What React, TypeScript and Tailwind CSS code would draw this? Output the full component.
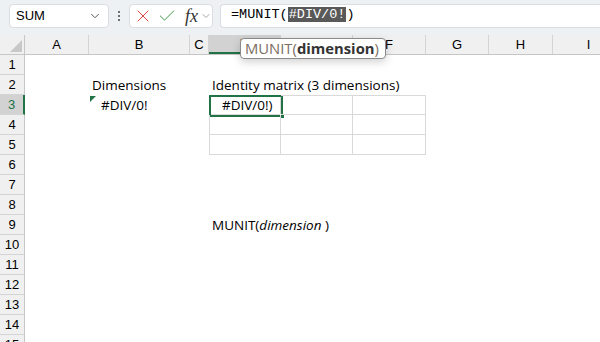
import React from 'react';
import { ChevronDown, X, Check } from 'lucide-react';

const cols = [
  { name: 'A', w: 64 },
  { name: 'B', w: 101 },
  { name: 'C', w: 19 },
  { name: 'D', w: 72 },
  { name: 'E', w: 72 },
  { name: 'F', w: 73 },
  { name: 'G', w: 63 },
  { name: 'H', w: 64 },
  { name: 'I', w: 72 },
];

const rows = Array.from({ length: 15 }, (_, i) => i + 1);

const Cell: React.FC<{ w: number; row: number; col: string }> = ({ w, row, col }) => {
  const inTable = ['D', 'E', 'F'].includes(col) && row >= 3 && row <= 5;
  let content: React.ReactNode = null;

  if (row === 2 && col === 'B') content = <span className="pl-[3px]">Dimensions</span>;
  if (row === 2 && col === 'D') content = <span className="pl-[3px]">Identity matrix (3 dimensions)</span>;
  if (row === 3 && col === 'B') content = <span className="pl-[12px]">#DIV/0!</span>;
  if (row === 3 && col === 'D') content = <span className="pl-[12px]">#DIV/0!)</span>;
  if (row === 9 && col === 'D')
    content = (
      <span className="pl-[3px]">
        MUNIT(<i>dimension</i> )
      </span>
    );

  return (
    <div
      className={`relative h-full shrink-0 flex items-center whitespace-nowrap text-[13.5px] text-black ${
        inTable ? 'border-r border-b border-[#d9d9d9]' : ''
      } ${inTable && col === 'D' ? 'border-l' : ''} ${row === 3 && inTable ? 'border-t' : ''}`}
      style={{ width: w }}
    >
      {content}
      {row === 3 && col === 'B' && (
        <div className="absolute left-[1px] top-[1px] w-0 h-0 border-t-[6px] border-r-[6px] border-t-[#217346] border-r-transparent" />
      )}
      {row === 3 && col === 'D' && (
        <div className="absolute -left-[1px] -top-[1px] w-[74px] h-[22px] border-2 border-[#217346]">
          <div className="absolute -right-[4px] -bottom-[4px] w-[5px] h-[5px] bg-[#217346] border border-white" />
        </div>
      )}
    </div>
  );
};

export default function App() {
  return (
    <div className="w-[600px] h-[342px] overflow-hidden bg-white relative" style={{ fontFamily: '"Open Sans", "Liberation Sans", sans-serif' }}>
      {/* Formula toolbar */}
      <div className="h-[35px] bg-[#eef1f4] flex items-center pl-[9px] gap-[6px] pb-[4px]">
        <div className="w-[100px] h-[24px] bg-white border border-[#dadde1] rounded-[4px] flex items-center justify-between pl-[6px] pr-[6px]">
          <span className="text-[13px] text-black" style={{ fontFamily: '"Liberation Sans", sans-serif' }}>SUM</span>
          <ChevronDown size={14} strokeWidth={1.5} className="text-[#444]" />
        </div>
        <div className="flex flex-col gap-[2px] px-[3px]">
          <span className="w-[2px] h-[2px] bg-[#444] rounded-full" />
          <span className="w-[2px] h-[2px] bg-[#444] rounded-full" />
          <span className="w-[2px] h-[2px] bg-[#444] rounded-full" />
        </div>
        <div className="w-[84px] h-[24px] bg-white border border-[#dadde1] rounded-[4px] flex items-center pl-[3px] gap-[4px]">
          <X size={20} strokeWidth={1.2} className="text-[#e0463f]" />
          <Check size={20} strokeWidth={1.2} className="text-[#3d9a45]" />
          <span className="italic text-[18px] text-[#333] leading-none ml-[4px]" style={{ fontFamily: '"Liberation Serif", serif' }}>
            fx
          </span>
          <ChevronDown size={12} strokeWidth={1.5} className="text-[#888] -ml-[2px]" />
        </div>
        <div className="flex-1 h-[24px] bg-white border border-[#dadde1] rounded-l-[4px] border-r-0 flex items-center pl-[10px] ml-[1px]">
          <span className="text-[13.5px] text-black" style={{ fontFamily: '"Liberation Mono", monospace' }}>
            =MUNIT(
            <span className="bg-[#595959] text-white px-[1px]">#DIV/0!</span>)
          </span>
        </div>
      </div>

      {/* Column headers */}
      <div className="flex h-[20px] bg-[#f0f0f0] border-b border-[#c6c6c6] text-[13px] text-black" style={{ fontFamily: '"Liberation Sans", sans-serif' }}>
        <div className="w-[25px] h-full shrink-0 border-r border-[#c6c6c6] relative">
          <div className="absolute right-[2px] bottom-[2px] w-0 h-0 border-b-[12px] border-l-[12px] border-b-[#c8c8c8] border-l-transparent" />
        </div>
        {cols.map((c) => (
          <div
            key={c.name}
            className={`h-full shrink-0 flex items-center justify-center border-r border-[#d4d4d4] ${
              c.name === 'D' ? 'bg-[#d2d2d2] border-b-2 border-b-[#217346]' : ''
            }`}
            style={{ width: c.w }}
          >
            {c.name}
          </div>
        ))}
      </div>

      {/* Rows */}
      {rows.map((r) => (
        <div key={r} className="flex h-[20px]">
          <div
            className={`w-[25px] h-full shrink-0 flex items-center justify-center border-b border-[#d4d4d4] text-[13px] ${
              r === 3 ? 'bg-[#d2d2d2] border-r-2 border-r-[#217346] text-[#217346]' : 'bg-[#f0f0f0] border-r border-r-[#c6c6c6] text-black'
            }`}
            style={{ fontFamily: '"Liberation Sans", sans-serif' }}
          >
            {r}
          </div>
          {cols.map((c) => (
            <Cell key={c.name} w={c.w} row={r} col={c.name} />
          ))}
        </div>
      ))}

      {/* Function tooltip */}
      <div className="absolute left-[240px] top-[38px] h-[21px] pl-[4px] pr-[6px] bg-white border border-[#8a8a8a] rounded-[4px] shadow-[0_3px_8px_rgba(0,0,0,0.18)] flex items-center text-[14.8px] whitespace-nowrap" style={{ fontFamily: '"Open Sans", "Liberation Sans", sans-serif' }}>
        <span className="text-[#7a6e62]">MUNIT(</span>
        <span className="font-bold text-[#333]">dimension</span>
        <span className="text-[#7a6e62]">)</span>
      </div>
    </div>
  );
}
